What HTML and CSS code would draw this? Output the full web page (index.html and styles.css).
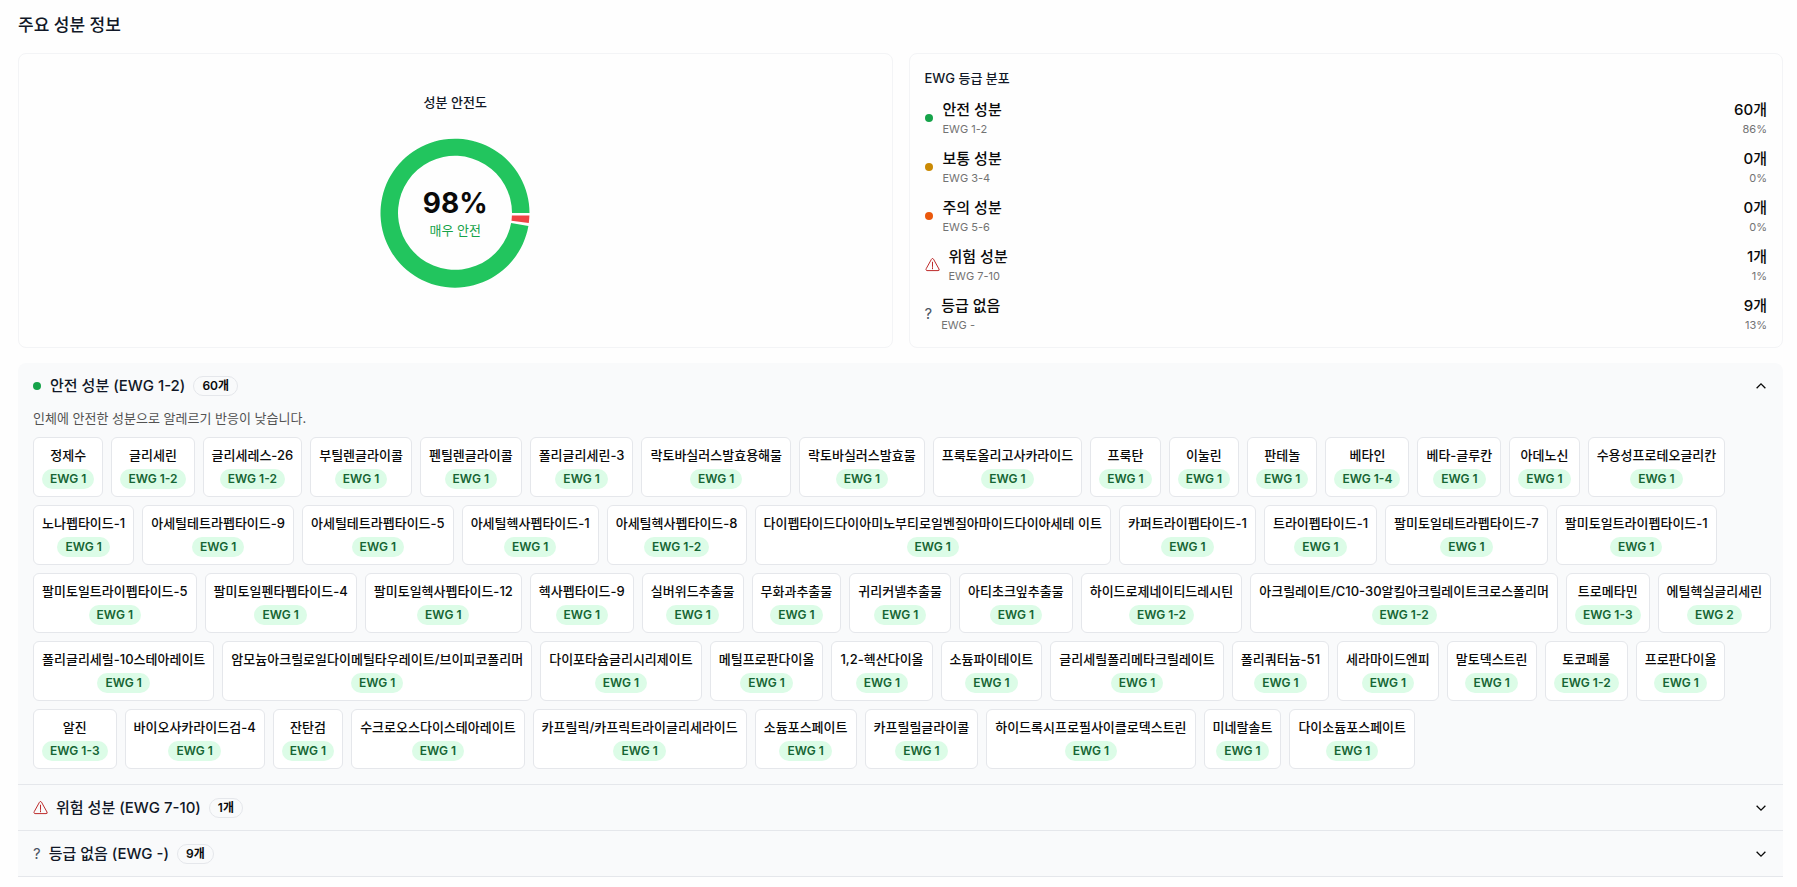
FILE: index.html
```html
<!DOCTYPE html>
<html lang="ko">
<head>
    <meta charset="UTF-8">
    <meta name="viewport" content="width=device-width, initial-scale=1.0">
    <title>주요 성분 정보</title>
    <link rel="stylesheet" href="styles.css">
</head>
<body>
    <main class="page">
        <h1 class="page-title">주요 성분 정보</h1>

        <div class="summary">
            <section class="card safety">
                <h2 class="card-title">성분 안전도</h2>
                <div class="donut">
                    <svg viewBox="-95 -95 190 190" width="190" height="190" aria-hidden="true">
                        <path fill="#22c55e" d="M74.5 0A74.5 74.5 0 1 0 73.4 12.9L56.1 9.9A57 57 0 1 1 57 0Z"/>
                        <path fill="#ef4444" d="M74.4 2.6A74.5 74.5 0 0 1 73.8 10.1L56.5 7.7A57 57 0 0 0 56.9 2.6Z"/>
                    </svg>
                    <div class="donut-label">
                        <strong class="score">98%</strong>
                        <span class="score-text">매우 안전</span>
                    </div>
                </div>
            </section>

            <section class="card grades">
                <h2 class="card-title">EWG 등급 분포</h2>
                <ul class="grade-list">
                    <li class="grade">
                        <span class="dot green"></span>
                        <div class="grade-name">안전 성분<small>EWG 1-2</small></div>
                        <div class="grade-count">60개<small>86%</small></div>
                    </li>
                    <li class="grade">
                        <span class="dot yellow"></span>
                        <div class="grade-name">보통 성분<small>EWG 3-4</small></div>
                        <div class="grade-count">0개<small>0%</small></div>
                    </li>
                    <li class="grade">
                        <span class="dot orange"></span>
                        <div class="grade-name">주의 성분<small>EWG 5-6</small></div>
                        <div class="grade-count">0개<small>0%</small></div>
                    </li>
                    <li class="grade">
                        <svg class="warn" viewBox="0 0 16 16" aria-hidden="true"><path d="M7 2.2a1.15 1.15 0 0 1 2 0l5.9 10.6a1.15 1.15 0 0 1-1 1.7H2.1a1.15 1.15 0 0 1-1-1.7Z"/><path d="M8 5.5v4.6M8 11.4v1.2"/></svg>
                        <div class="grade-name">위험 성분<small>EWG 7-10</small></div>
                        <div class="grade-count">1개<small>1%</small></div>
                    </li>
                    <li class="grade">
                        <span class="unknown">?</span>
                        <div class="grade-name">등급 없음<small>EWG -</small></div>
                        <div class="grade-count">9개<small>13%</small></div>
                    </li>
                </ul>
            </section>
        </div>

        <div class="accordion">
            <details class="item" open>
                <summary class="item-head">
                    <span class="dot green"></span>
                    <span class="item-title">안전 성분 (EWG 1-2)</span>
                    <span class="count">60개</span>
                    <svg class="chevron" viewBox="0 0 16 16" aria-hidden="true"><path d="m3 5.5 5 5 5-5"/></svg>
                </summary>
                <div class="item-body">
                    <p class="desc">인체에 안전한 성분으로 알레르기 반응이 낮습니다.</p>
                    <ul class="chips">
                        <li class="chip">정제수<span class="ewg">EWG 1</span></li>
                        <li class="chip">글리세린<span class="ewg">EWG 1-2</span></li>
                        <li class="chip">글리세레스-26<span class="ewg">EWG 1-2</span></li>
                        <li class="chip">부틸렌글라이콜<span class="ewg">EWG 1</span></li>
                        <li class="chip">펜틸렌글라이콜<span class="ewg">EWG 1</span></li>
                        <li class="chip">폴리글리세린-3<span class="ewg">EWG 1</span></li>
                        <li class="chip">락토바실러스발효용해물<span class="ewg">EWG 1</span></li>
                        <li class="chip">락토바실러스발효물<span class="ewg">EWG 1</span></li>
                        <li class="chip">프룩토올리고사카라이드<span class="ewg">EWG 1</span></li>
                        <li class="chip">프룩탄<span class="ewg">EWG 1</span></li>
                        <li class="chip">이눌린<span class="ewg">EWG 1</span></li>
                        <li class="chip">판테놀<span class="ewg">EWG 1</span></li>
                        <li class="chip">베타인<span class="ewg">EWG 1-4</span></li>
                        <li class="chip">베타-글루칸<span class="ewg">EWG 1</span></li>
                        <li class="chip">아데노신<span class="ewg">EWG 1</span></li>
                        <li class="chip">수용성프로테오글리칸<span class="ewg">EWG 1</span></li>
                        <li class="chip">노나펩타이드-1<span class="ewg">EWG 1</span></li>
                        <li class="chip">아세틸테트라펩타이드-9<span class="ewg">EWG 1</span></li>
                        <li class="chip">아세틸테트라펩타이드-5<span class="ewg">EWG 1</span></li>
                        <li class="chip">아세틸헥사펩타이드-1<span class="ewg">EWG 1</span></li>
                        <li class="chip">아세틸헥사펩타이드-8<span class="ewg">EWG 1-2</span></li>
                        <li class="chip">다이펩타이드다이아미노부티로일벤질아마이드다이아세테 이트<span class="ewg">EWG 1</span></li>
                        <li class="chip">카퍼트라이펩타이드-1<span class="ewg">EWG 1</span></li>
                        <li class="chip">트라이펩타이드-1<span class="ewg">EWG 1</span></li>
                        <li class="chip">팔미토일테트라펩타이드-7<span class="ewg">EWG 1</span></li>
                        <li class="chip">팔미토일트라이펩타이드-1<span class="ewg">EWG 1</span></li>
                        <li class="chip">팔미토일트라이펩타이드-5<span class="ewg">EWG 1</span></li>
                        <li class="chip">팔미토일펜타펩타이드-4<span class="ewg">EWG 1</span></li>
                        <li class="chip">팔미토일헥사펩타이드-12<span class="ewg">EWG 1</span></li>
                        <li class="chip">헥사펩타이드-9<span class="ewg">EWG 1</span></li>
                        <li class="chip">실버위드추출물<span class="ewg">EWG 1</span></li>
                        <li class="chip">무화과추출물<span class="ewg">EWG 1</span></li>
                        <li class="chip">귀리커넬추출물<span class="ewg">EWG 1</span></li>
                        <li class="chip">아티초크잎추출물<span class="ewg">EWG 1</span></li>
                        <li class="chip">하이드로제네이티드레시틴<span class="ewg">EWG 1-2</span></li>
                        <li class="chip">아크릴레이트/C10-30알킬아크릴레이트크로스폴리머<span class="ewg">EWG 1-2</span></li>
                        <li class="chip">트로메타민<span class="ewg">EWG 1-3</span></li>
                        <li class="chip">에틸헥실글리세린<span class="ewg">EWG 2</span></li>
                        <li class="chip">폴리글리세릴-10스테아레이트<span class="ewg">EWG 1</span></li>
                        <li class="chip">암모늄아크릴로일다이메틸타우레이트/브이피코폴리머<span class="ewg">EWG 1</span></li>
                        <li class="chip">다이포타슘글리시리제이트<span class="ewg">EWG 1</span></li>
                        <li class="chip">메틸프로판다이올<span class="ewg">EWG 1</span></li>
                        <li class="chip">1,2-헥산다이올<span class="ewg">EWG 1</span></li>
                        <li class="chip">소듐파이테이트<span class="ewg">EWG 1</span></li>
                        <li class="chip">글리세릴폴리메타크릴레이트<span class="ewg">EWG 1</span></li>
                        <li class="chip">폴리쿼터늄-51<span class="ewg">EWG 1</span></li>
                        <li class="chip">세라마이드엔피<span class="ewg">EWG 1</span></li>
                        <li class="chip">말토덱스트린<span class="ewg">EWG 1</span></li>
                        <li class="chip">토코페롤<span class="ewg">EWG 1-2</span></li>
                        <li class="chip">프로판다이올<span class="ewg">EWG 1</span></li>
                        <li class="chip">알진<span class="ewg">EWG 1-3</span></li>
                        <li class="chip">바이오사카라이드검-4<span class="ewg">EWG 1</span></li>
                        <li class="chip">잔탄검<span class="ewg">EWG 1</span></li>
                        <li class="chip">수크로오스다이스테아레이트<span class="ewg">EWG 1</span></li>
                        <li class="chip">카프릴릭/카프릭트라이글리세라이드<span class="ewg">EWG 1</span></li>
                        <li class="chip">소듐포스페이트<span class="ewg">EWG 1</span></li>
                        <li class="chip">카프릴릴글라이콜<span class="ewg">EWG 1</span></li>
                        <li class="chip">하이드록시프로필사이클로덱스트린<span class="ewg">EWG 1</span></li>
                        <li class="chip">미네랄솔트<span class="ewg">EWG 1</span></li>
                        <li class="chip">다이소듐포스페이트<span class="ewg">EWG 1</span></li>
                    </ul>
                </div>
            </details>

            <details class="item">
                <summary class="item-head">
                    <svg class="warn" viewBox="0 0 16 16" aria-hidden="true"><path d="M7 2.2a1.15 1.15 0 0 1 2 0l5.9 10.6a1.15 1.15 0 0 1-1 1.7H2.1a1.15 1.15 0 0 1-1-1.7Z"/><path d="M8 5.5v4.6M8 11.4v1.2"/></svg>
                    <span class="item-title">위험 성분 (EWG 7-10)</span>
                    <span class="count">1개</span>
                    <svg class="chevron" viewBox="0 0 16 16" aria-hidden="true"><path d="m3 5.5 5 5 5-5"/></svg>
                </summary>
            </details>

            <details class="item">
                <summary class="item-head">
                    <span class="unknown">?</span>
                    <span class="item-title">등급 없음 (EWG -)</span>
                    <span class="count">9개</span>
                    <svg class="chevron" viewBox="0 0 16 16" aria-hidden="true"><path d="m3 5.5 5 5 5-5"/></svg>
                </summary>
            </details>
        </div>
    </main>
</body>
</html>
```
FILE: styles.css
```css
* {
    box-sizing: border-box;
    margin: 0;
    padding: 0;
}
body {
    background-color: #fefefe;
    color: #0a0a0a;
    font-family: Inter, 'Noto Sans CJK KR', sans-serif;
    font-size: 13px;
    line-height: 20px;
}
ul {
    list-style: none;
}
.page {
    padding: 11px 14px 10px 18px;
}
.page-title {
    margin-bottom: 14px;
    font-size: 17px;
    font-weight: 500;
    line-height: 28px;
    color: #111827;
}

/* 요약 카드 */
.summary {
    display: grid;
    grid-template-columns: 1fr 1fr;
    gap: 16px;
    margin-bottom: 15px;
}
.card {
    padding: 14px 15px;
    border: 1px solid #f3f4f6;
    border-radius: 8px;
}
.card-title {
    font-size: 13px;
    font-weight: 500;
    color: #111827;
}
.safety {
    display: flex;
    flex-direction: column;
    align-items: center;
    justify-content: center;
    gap: 6px;
    padding-bottom: 16px;
}
.donut {
    position: relative;
}
.donut svg {
    display: block;
}
.donut-label {
    position: absolute;
    inset: 0;
    display: flex;
    flex-direction: column;
    align-items: center;
    justify-content: center;
}
.score {
    font-size: 28px;
    font-weight: 700;
    line-height: 34px;
}
.score-text {
    color: #16a34a;
}
.grade-list {
    display: flex;
    flex-direction: column;
    gap: 10px;
    margin-top: 10px;
}
.grade {
    display: flex;
    align-items: center;
    gap: 9px;
    font-size: 15px;
    font-weight: 500;
    line-height: 23px;
}
.grade small {
    display: block;
    font-size: 11px;
    font-weight: 400;
    line-height: 16px;
    color: #737373;
}
.grade-count {
    margin-left: auto;
    text-align: right;
}

/* 등급 아이콘 */
.dot {
    width: 8px;
    height: 8px;
    margin-right: 1px;
    border-radius: 50%;
}
.green {
    background-color: #16a34a;
}
.yellow {
    background-color: #ca8a04;
}
.orange {
    background-color: #ea580c;
}
.warn {
    width: 15px;
    height: 15px;
    fill: none;
    stroke: #b91c1c;
    stroke-linecap: round;
}
.unknown {
    font-size: 15px;
    font-weight: 400;
    color: #4b5563;
}

/* 성분 목록 */
.accordion {
    overflow: hidden;
    border-radius: 8px 8px 0 0;
    background-color: #f9fafb;
}
.item {
    border-bottom: 1px solid #e5e7eb;
}
.item-head {
    display: flex;
    align-items: center;
    gap: 8px;
    height: 45px;
    padding: 0 15px;
    cursor: pointer;
}
.item-title {
    font-size: 15px;
    font-weight: 500;
    color: #111827;
}
.count {
    padding: 0 8px;
    border: 1px solid #e5e7eb;
    border-radius: 10px;
    font-size: 12px;
    font-weight: 600;
    line-height: 18px;
}
.chevron {
    width: 14px;
    height: 14px;
    margin-left: auto;
    fill: none;
    stroke: #0a0a0a;
    stroke-width: 1.5;
}
.item[open] .chevron {
    transform: rotate(180deg);
}
.item-body {
    padding: 0 8px 15px 15px;
}
.desc {
    margin-bottom: 9px;
    color: #525252;
}
.chips {
    display: flex;
    flex-wrap: wrap;
    gap: 8px;
}
.chip {
    display: flex;
    flex-direction: column;
    align-items: center;
    gap: 4px;
    padding: 7px 8px;
    border: 1px solid #e5e7eb;
    border-radius: 6px;
    background-color: #fff;
    font-weight: 500;
}
.ewg {
    padding: 0 8px;
    border-radius: 10px;
    background-color: #dcfce7;
    font-size: 12px;
    font-weight: 600;
    color: #166534;
}
```
